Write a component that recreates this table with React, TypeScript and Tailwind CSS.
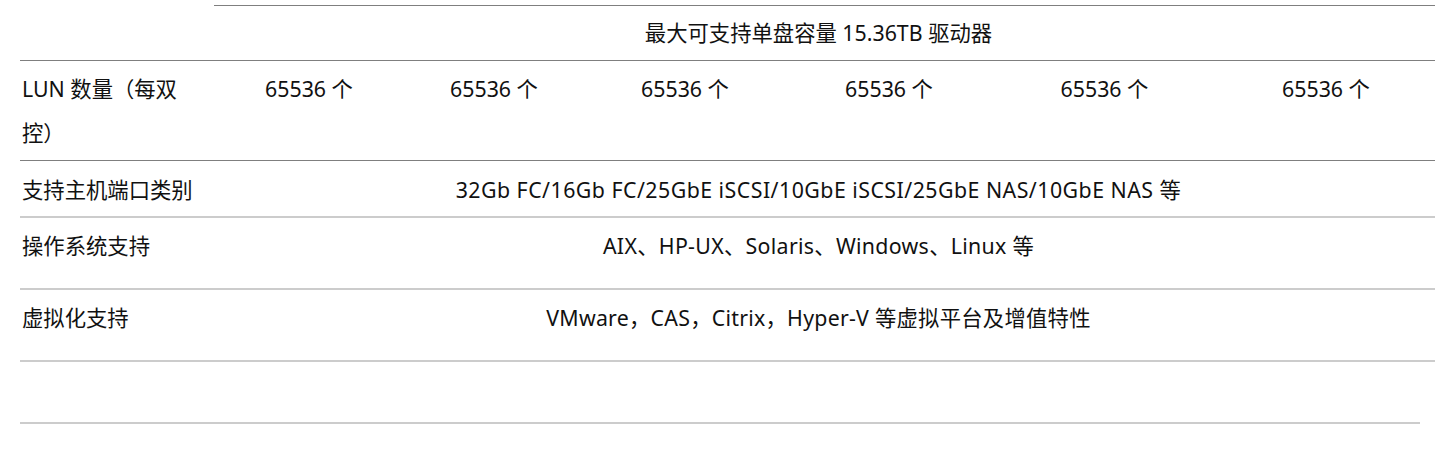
import React from "react";

const dark = "border-[#7f7f7f]";
const cols = ["w-[202px]", "w-[168px]", "w-[214px]", "w-[194px]", "w-[237px]", "w-[206px]"];

export default function App() {
  return (
    <div
      className="bg-white w-[1453px] h-[460px] pt-[5px] pl-[20px] text-[21.33px] leading-[44px] text-[#111]"
      style={{ fontFamily: '"Noto Sans", "Noto Sans CJK SC", sans-serif' }}
    >
      <div className="w-[1415px]">
        {/* Row 1 */}
        <div className={`flex h-[56px] border-b ${dark}`}>
          <div className="w-[194px] shrink-0" />
          <div className={`flex-1 border-t ${dark} pt-[5px] pr-[12px] text-center`}>
            最大可支持单盘容量 15.36TB 驱动器
          </div>
        </div>
        {/* Row 2 */}
        <div className={`flex h-[100px] border-b ${dark}`}>
          <div className="w-[194px] shrink-0 pl-[2px] pt-[6px] pr-[20px]">LUN 数量（每双控）</div>
          {cols.map((c, i) => (
            <div key={i} className={`${c} shrink-0 pt-[6px] pr-[12px] text-center`}>
              65536 个
            </div>
          ))}
        </div>
        {/* Row 3 */}
        <div className="flex h-[57px] border-b-2 border-[#cccccc]">
          <div className="w-[194px] shrink-0 pl-[2px] pt-[7px]">支持主机端口类别</div>
          <div className="flex-1 pt-[7px] pr-[12px] text-center tracking-[0.47px]">
            32Gb FC/16Gb FC/25GbE iSCSI/10GbE iSCSI/25GbE NAS/10GbE NAS 等
          </div>
        </div>
        {/* Row 4 */}
        <div className="flex h-[72px] border-b-2 border-[#cccccc]">
          <div className="w-[194px] shrink-0 pl-[2px] pt-[6px]">操作系统支持</div>
          <div className="flex-1 pt-[6px] pr-[12px] text-center tracking-[0.3px]">
            AIX、HP-UX、Solaris、Windows、Linux 等
          </div>
        </div>
        {/* Row 5 */}
        <div className="flex h-[72px] border-b-2 border-[#cccccc]">
          <div className="w-[194px] shrink-0 pl-[2px] pt-[6px]">虚拟化支持</div>
          <div className="flex-1 pt-[6px] pr-[12px] text-center tracking-[0.25px]">
            VMware，CAS，Citrix，Hyper-V 等虚拟平台及增值特性
          </div>
        </div>
        {/* Row 6 */}
        <div className="flex h-[62px] border-b-2 border-[#cccccc] mr-[15px]" />
      </div>
    </div>
  );
}
